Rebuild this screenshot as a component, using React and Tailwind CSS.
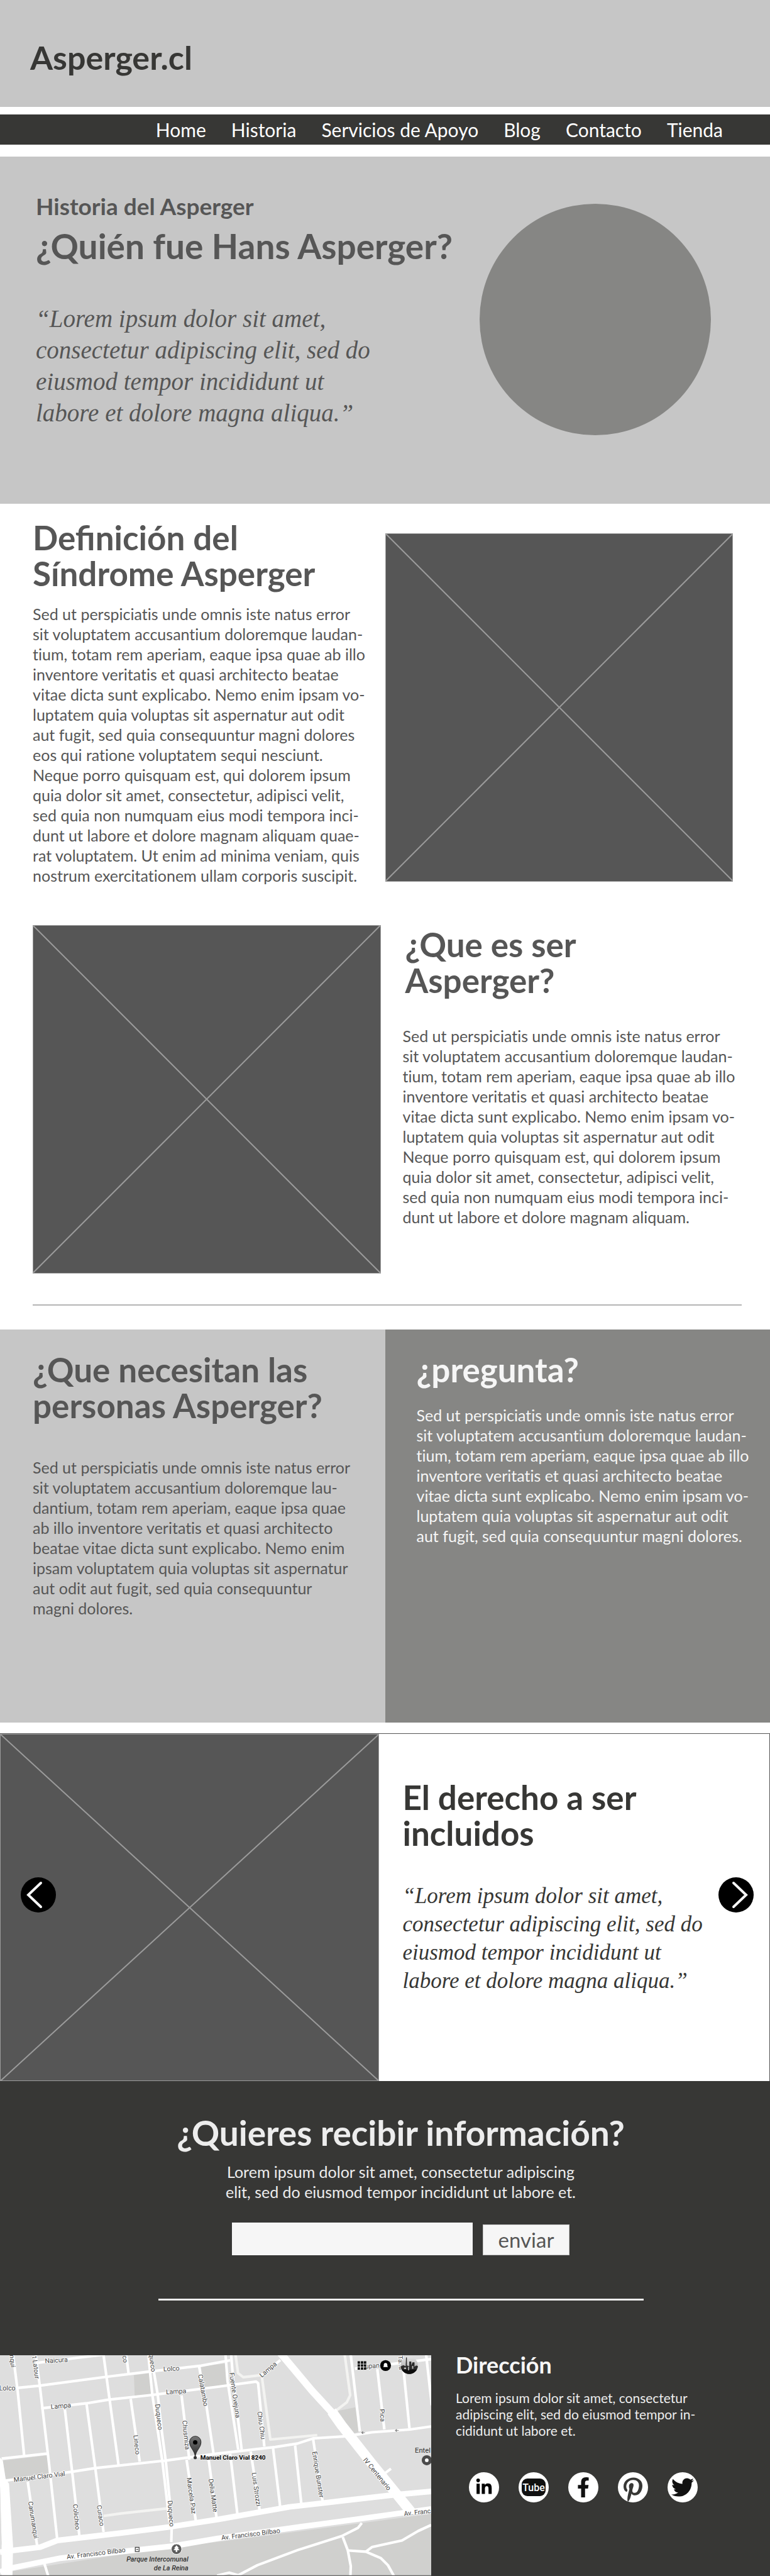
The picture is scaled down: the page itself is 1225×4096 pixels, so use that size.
import React from "react";
import { FaLinkedinIn, FaFacebookF, FaPinterestP, FaTwitter } from "react-icons/fa";

const NAV = ["Home", "Historia", "Servicios de Apoyo", "Blog", "Contacto", "Tienda"];

const QUOTE = [
  "“Lorem ipsum dolor sit amet,",
  "consectetur adipiscing elit, sed do",
  "eiusmod tempor incididunt ut",
  "labore et dolore magna aliqua.”",
];

const DEFINITION = [
  "Sed ut perspiciatis unde omnis iste natus error",
  "sit voluptatem accusantium doloremque laudan-",
  "tium, totam rem aperiam, eaque ipsa quae ab illo",
  "inventore veritatis et quasi architecto beatae",
  "vitae dicta sunt explicabo. Nemo enim ipsam vo-",
  "luptatem quia voluptas sit aspernatur aut odit",
  "aut fugit, sed quia consequuntur magni dolores",
  "eos qui ratione voluptatem sequi nesciunt.",
  "Neque porro quisquam est, qui dolorem ipsum",
  "quia dolor sit amet, consectetur, adipisci velit,",
  "sed quia non numquam eius modi tempora inci-",
  "dunt ut labore et dolore magnam aliquam quae-",
  "rat voluptatem. Ut enim ad minima veniam, quis",
  "nostrum exercitationem ullam corporis suscipit.",
];

const ABOUT = [
  ...DEFINITION.slice(0, 6),
  "Neque porro quisquam est, qui dolorem ipsum",
  "quia dolor sit amet, consectetur, adipisci velit,",
  "sed quia non numquam eius modi tempora inci-",
  "dunt ut labore et dolore magnam aliquam.",
];

const NEEDS = [
  "Sed ut perspiciatis unde omnis iste natus error",
  "sit voluptatem accusantium doloremque lau-",
  "dantium, totam rem aperiam, eaque ipsa quae",
  "ab illo inventore veritatis et quasi architecto",
  "beatae vitae dicta sunt explicabo. Nemo enim",
  "ipsam voluptatem quia voluptas sit aspernatur",
  "aut odit aut fugit, sed quia consequuntur",
  "magni dolores.",
];

const QUESTION = [...DEFINITION.slice(0, 6), "aut fugit, sed quia consequuntur magni dolores."];

function Lines({ lines }) {
  return lines.map((line, i) => (
    <span key={i} className="block whitespace-nowrap">
      {line}
    </span>
  ));
}

function Heading({ lines, className = "" }) {
  return (
    <h2 className={`text-[53px] leading-[57px] font-bold ${className}`}>
      <Lines lines={lines} />
    </h2>
  );
}

function Body({ lines, className = "" }) {
  return (
    <p className={`text-[25px] leading-8 [font-variant-ligatures:none] ${className}`}>
      <Lines lines={lines} />
    </p>
  );
}

function Placeholder({ className = "" }) {
  return (
    <svg
      viewBox="0 0 100 100"
      preserveAspectRatio="none"
      role="img"
      aria-label="Imagen"
      className={`block w-full bg-[#565656] outline-1 -outline-offset-1 outline-[#9b9b9b] ${className}`}
    >
      <path d="M0 0L100 100M100 0L0 100" fill="none" stroke="#9b9b9b" strokeWidth="2" vectorEffect="non-scaling-stroke" />
    </svg>
  );
}

function ArrowButton({ label, d, className }) {
  return (
    <button type="button" aria-label={label} className={`absolute top-[228px] size-14 rounded-full bg-black ${className}`}>
      <svg viewBox="0 0 56 56" className="size-full" fill="none" stroke="#f6f6f6" strokeWidth="4" strokeLinecap="round">
        <path d={d} />
      </svg>
    </button>
  );
}

const BLOCKS = [
  "666,150 742,140 752,245 670,252",
  "1000,105 1130,92 1140,205 1012,215",
  "14,575 238,548 246,640 28,666",
  "1660,332 1768,310 1790,430 1730,450",
  "40,1128 860,1002 1080,980 1800,885 2145,840 2145,1149 40,1149",
];

const SOFT_ROADS = [
  "515,850 600,838 835,812",
  "1172,50 1184,140 1210,160 1300,150",
  "1303,160 1345,470 1578,448",
  "1715,50 1742,250 1725,285 1660,335",
];

const ROADS = [
  "80,214 190,203 530,158 745,132 1000,103 1145,76",
  "190,88 400,62 515,48",
  "205,315 430,290 540,272 760,248 1080,208 1274,182 1284,190 1315,505",
  "65,50 88,230 120,550",
  "178,50 200,220 245,600 285,970",
  "322,315 360,640 395,950",
  "430,290 475,620 515,930",
  "515,50 545,270 590,600",
  "628,50 640,145",
  "650,268 695,580",
  "738,50 758,250 808,580 843,880",
  "765,130 785,250 805,430 825,580 855,880 852,980",
  "903,250 942,570",
  "928,570 975,880",
  "990,105 1025,290 1063,545",
  "1038,570 1078,865",
  "30,674 360,630 475,612 820,575 1080,540 1370,507 1480,490 1560,464 1720,454 1850,434 2040,420 2145,405",
  "8,565 235,540",
  "138,680 185,1000",
  "1122,50 1132,180 1185,520",
  "1150,50 1158,150 1202,520",
  "1145,540 1182,850",
  "1247,530 1293,830",
  "1358,510 1395,815",
  "1468,500 1500,800",
  "1558,470 1606,785",
  "1745,50 1790,430",
  "1877,120 1912,420",
  "2000,50 2037,415",
  "2120,50 2148,300",
  "1765,118 2145,70",
  "1300,150 1395,75",
  "1915,638 1945,615",
  "220,1085 240,1149",
  "1080,1146 1140,1132 1185,1145 1280,1095 1480,1020 1700,950 1780,910 1800,885",
  "1705,955 1730,1020 1745,1100 1743,1149",
  "1735,1022 1820,1028 1895,1060 1930,1095 1960,1149",
  "1820,1028 1850,1005 2000,972 2080,925 2145,895",
];

const LABELS = [
  ["nqui", 62, 80, 84],
  ["t Latour", 178, 112, 83],
  ["Naicura", 280, 76, -4],
  ["co", 622, 70, 84],
  ["queco", 758, 88, 83],
  ["Lolco", 853, 118, -3],
  ["Lolco", 36, 214, 0],
  ["Lampa", 303, 303, -5],
  ["Lampa", 876, 231, -3],
  ["Calatambo", 1010, 225, 80],
  ["Duqueco", 790, 358, 83],
  ["Lineco", 680, 496, 84],
  ["Chusmiza", 925, 448, 84],
  ["Manuel Claro Vial", 196, 655, -7],
  ["Marcela Paz", 952, 750, 82],
  ["Delia Matte", 1060, 748, 82],
  ["Canumanqui", 165, 870, 81],
  ["Colicheo", 380, 855, 84],
  ["Curaco", 500, 848, 82],
  ["Duqueco", 850, 838, 86],
  ["Av. Francisco Bilbao", 478, 1036, -7],
  ["Av. Francisco Bilbao", 1247, 941, -7],
  ["Av. Franc", 2076, 832, -6],
  ["Fuente Ovejuna", 1168, 250, 82],
  ["Lampa", 1334, 122, -40],
  ["Chiu Chiu", 1300, 400, 82],
  ["Luis Strozzi", 1275, 718, 82],
  ["Enrique Bunster", 1582, 644, 81],
  ["IV Centenario", 1876, 642, 51],
  ["Pica", 1902, 350, 86],
  ["Ta..a", 1994, 88, 84],
  ["upan", 1852, 104, -4],
];

function Street({ points, width = 13, color = "#fff" }) {
  return <polyline points={points} fill="none" stroke={color} strokeWidth={width} strokeLinejoin="round" />;
}

function CityMap() {
  return (
    <svg
      viewBox="0 51 2145 1098"
      role="img"
      aria-label="Mapa: Manuel Claro Vial 8240"
      className="block aspect-[2145/1098] w-[56%] shrink-0 bg-[#dedede] font-[Roboto,sans-serif]"
    >
      {BLOCKS.map((p) => (
        <polygon key={p} points={p} fill="#d0d0ce" />
      ))}
      {SOFT_ROADS.map((p) => (
        <Street key={p} points={p} color="#f3f3f1" />
      ))}
      {ROADS.map((p) => (
        <Street key={p} points={p} />
      ))}
      <polygon points="0,560 14,575 28,665 45,690 65,1000 62,1149 8,1149 8,990 0,700" fill="#fff" />
      <polygon points="0,700 8,990 0,1010" fill="#dedede" />
      <Street width={28} points="0,1030 60,1022 200,1005 285,972 600,935 840,905 1080,868 1440,805 1700,775 1960,745 2145,728" />
      <Street width={28} points="0,1128 60,1108 300,1060 860,1000 1080,962 1500,903 1800,863 2145,815" />
      <Street width={36} points="1395,40 1550,225 1665,350" />
      <Street width={50} points="1650,330 1700,400 1850,590 2045,830" />

      <g fontSize="33" fill="#454545" stroke="#fff" strokeWidth="5" paintOrder="stroke" textAnchor="middle">
        {LABELS.map(([text, x, y, r]) => (
          <text key={`${text}${x}`} x={x} y={y} dy="11" transform={`rotate(${r} ${x} ${y})`}>
            {text}
          </text>
        ))}
      </g>

      <g fill="#8a8a8a" stroke="#8a8a8a" strokeWidth="3">
        <path d="M1798 436h18M1798 436l7-6v12zM1966 425h18M1966 425l7-6v12z" />
      </g>

      <g fontSize="34" fontStyle="italic" fontWeight="500" fill="#333" textAnchor="end">
        <text x="937" y="1078">Parque Intercomunal</text>
        <text x="937" y="1120">de La Reina</text>
      </g>
      <circle cx="878" cy="1015" r="26" fill="#5c5c5c" stroke="#fff" strokeWidth="3" />
      <path d="M878 996l12 14h-6l9 10h-11v9h-8v-9h-11l9-10h-6z" fill="#fff" />
      <rect x="673" y="1006" width="19" height="21" fill="#fff" stroke="#444" strokeWidth="4" />
      <path d="M678 1016h9" stroke="#444" strokeWidth="4" />

      <text x="2064" y="535" fontSize="35" fill="#333">Entel</text>
      <circle cx="2123" cy="573" r="25" fill="#4a4a4a" />
      <circle cx="2123" cy="573" r="9" fill="#fff" />

      <defs>
        <linearGradient id="pin" x1="0" y1="0" x2="0" y2="1">
          <stop offset="0" stopColor="#777" />
          <stop offset="1" stopColor="#2e2e2e" />
        </linearGradient>
        <linearGradient id="sky" x1="0" y1="0" x2="0" y2="1">
          <stop offset="0" stopColor="#e6e6e6" />
          <stop offset="1" stopColor="#9a9a9a" />
        </linearGradient>
        <clipPath id="avatar">
          <circle cx="2036" cy="101" r="43" />
        </clipPath>
      </defs>
      <circle cx="971" cy="560" r="8" fill="#333" />
      <path d="M971 556C968 522 943 512 943 482a28 28 0 0 1 57 0C1000 512 975 522 971 556z" fill="url(#pin)" stroke="#222" strokeWidth="3" />
      <circle cx="971" cy="484" r="11" fill="#000" />
      <text x="997" y="570" fontSize="31" fontWeight="700" fill="#000" stroke="#f4f4f4" strokeWidth="4" paintOrder="stroke">
        Manuel Claro Vial 8240
      </text>

      <path d="M1779 81h12v12h-12zM1795 81h12v12h-12zM1810 81h12v12h-12zM1779 96h12v12h-12zM1795 96h12v12h-12zM1810 96h12v12h-12zM1779 111h12v12h-12zM1795 111h12v12h-12zM1810 111h12v12h-12z" fill="#111" />
      <circle cx="1918" cy="102" r="27" fill="#000" />
      <path d="M1918 89c7 0 9 5 9 11v6l4 4h-26l4-4v-6c0-6 2-11 9-11z" fill="#fff" />
      <g clipPath="url(#avatar)">
        <rect x="1990" y="55" width="90" height="90" fill="url(#sky)" />
        <path d="M1990 108l16-8 12 6 2-44h4v40l12 4V82h10v20l6-16h10v22l8-6 14 4v45h-96z" fill="#2b2b2b" />
        <path d="M1990 122h96v30h-96z" fill="#0c0c0c" />
        <path d="M2010 112h10v8h-10zM2030 108h5v18h-5zM2050 104h6v14h-6z" fill="#bdbdbd" />
      </g>
      <path d="M0 1147h2145" stroke="#6a6a6a" strokeWidth="4" />
    </svg>
  );
}

function TubeMark() {
  return (
    <svg viewBox="0 0 40 28" className="w-10">
      <rect x="1" y="0" width="38" height="28" rx="9" fill="#111" />
      <text x="20" y="20" textAnchor="middle" fontSize="16" fontWeight="500" fill="#fff" className="font-[Roboto,sans-serif]">
        Tube
      </text>
    </svg>
  );
}

const SOCIAL = [
  ["LinkedIn", <FaLinkedinIn className="size-7 fill-black" />],
  ["YouTube", <TubeMark />],
  ["Facebook", <FaFacebookF className="size-8 fill-[#111]" />],
  ["Pinterest", <FaPinterestP className="mt-2 size-10 fill-[#373735]" />],
  ["Twitter", <FaTwitter className="size-9 fill-[#111]" />],
];

export default function App() {
  return (
    <div className="w-full overflow-hidden bg-white font-[Lato,sans-serif] text-[#565656]">
      <header>
        <div className="bg-[#c6c6c6] pt-[59px] pb-[47px] pl-12">
          <a href="#inicio" className="block text-[52px] leading-[64px] font-bold text-[#373735]">
            Asperger.cl
          </a>
        </div>
        <nav className="mt-3 flex h-12 items-center justify-end gap-10 bg-[#373735] pr-[75px] text-[30px] text-white">
          {NAV.map((item) => (
            <a key={item} href={`#${item.toLowerCase().replaceAll(" ", "-")}`} className="whitespace-nowrap">
              {item}
            </a>
          ))}
        </nav>
      </header>

      <main>
        <section className="mt-[19px] flex justify-between bg-[#c6c6c6] pt-[57px] pr-[94px] pb-[109px] pl-[57px]">
          <div>
            <p className="text-[37px] leading-[44px] font-bold">Historia del Asperger</p>
            <h1 className="mt-[9px] text-[55px] leading-[64px] font-bold whitespace-nowrap">¿Quién fue Hans Asperger?</h1>
            <blockquote className="mt-[59px] font-['Liberation_Serif',serif] text-[39px] leading-[50px] italic">
              <Lines lines={QUOTE} />
            </blockquote>
          </div>
          <div className="mt-[18px] size-[368px] shrink-0 rounded-full bg-[#868684]" />
        </section>

        <section className="flex">
          <div className="w-1/2 pt-[25px] pl-[52px]">
            <Heading lines={["Definición del", "Síndrome Asperger"]} />
            <Body lines={DEFINITION} className="mt-5" />
          </div>
          <div className="w-1/2 pt-[47px] pr-[59px]">
            <Placeholder className="aspect-square" />
          </div>
        </section>

        <section className="mt-[63px] flex">
          <div className="w-1/2 pr-[7px] pl-[52px]">
            <Placeholder className="aspect-square" />
          </div>
          <div className="w-1/2 pt-0.5 pl-7">
            <Heading lines={["¿Que es ser", "Asperger?"]} className="pl-1" />
            <Body lines={ABOUT} className="mt-11" />
          </div>
        </section>

        <hr className="mt-[49px] mr-[45px] ml-[52px] border-t-2 border-[#b4b4b4]" />

        <section className="mt-[38px] grid min-h-[625px] grid-cols-2">
          <div className="bg-[#c6c6c6] pt-[35px] pl-[52px]">
            <Heading lines={["¿Que necesitan las", "personas Asperger?"]} />
            <Body lines={NEEDS} className="mt-[54px]" />
          </div>
          <div className="bg-[#868684] pt-[35px] pl-[50px] text-[#f6f6f6]">
            <Heading lines={["¿pregunta?"]} />
            <Body lines={QUESTION} className="mt-7" />
          </div>
        </section>

        <section aria-label="Carrusel" className="relative mt-[17px] flex border-t border-r border-[#565656]">
          <div className="w-[49.3%]">
            <Placeholder className="aspect-[604/553]" />
          </div>
          <div className="pt-[72px] pl-[37px] text-[#373735]">
            <Heading lines={["El derecho a ser", "incluidos"]} />
            <blockquote className="mt-[49px] font-['Liberation_Serif',serif] text-[35px] leading-[45px] italic">
              <Lines lines={QUOTE} />
            </blockquote>
          </div>
          <ArrowButton label="Anterior" d="M32 9L12 28L32 47" className="left-[33px]" />
          <ArrowButton label="Siguiente" d="M24 9L44 28L24 47" className="right-[25px]" />
        </section>
      </main>

      <footer className="bg-[#373735] text-[#ededed]">
        <section className="flex flex-col items-center pt-[50px] pb-[87px] pl-[50px]">
          <h2 className="text-[55px] leading-[64px] font-bold">¿Quieres recibir información?</h2>
          <Body
            className="mt-3.5 text-center"
            lines={["Lorem ipsum dolor sit amet, consectetur adipiscing", "elit, sed do eiusmod tempor incididunt ut labore et."]}
          />
          <form className="mt-[33px] flex items-end gap-4" onSubmit={(e) => e.preventDefault()}>
            <input type="email" aria-label="Correo electrónico" className="h-[52px] w-[383px] bg-[#f6f6f6] px-3 text-[25px] text-[#565656]" />
            <button type="submit" className="h-[49px] w-[138px] border border-[#c6c6c6] bg-[#f6f6f6] text-[33px] leading-none text-[#565656]">
              enviar
            </button>
          </form>
          <hr className="mt-[69px] w-[772px] max-w-full border-t-3 border-[#ededed]" />
        </section>

        <section className="flex items-start">
          <CityMap />
          <div className="pl-[39px]">
            <h2 className="text-4xl leading-[30px] font-bold text-[#f6f6f6]">Dirección</h2>
            <p className="mt-[25px] text-[21px] leading-[26px] [font-variant-ligatures:none]">
              <Lines lines={["Lorem ipsum dolor sit amet, consectetur", "adipiscing elit, sed do eiusmod tempor in-", "cididunt ut labore et."]} />
            </p>
            <div className="mt-[53px] flex gap-[31px] pl-[21px]">
              {SOCIAL.map(([name, icon]) => (
                <a key={name} href={`#${name.toLowerCase()}`} aria-label={name} className="flex size-12 items-center justify-center overflow-hidden rounded-full bg-white">
                  {icon}
                </a>
              ))}
            </div>
          </div>
        </section>
      </footer>
    </div>
  );
}
